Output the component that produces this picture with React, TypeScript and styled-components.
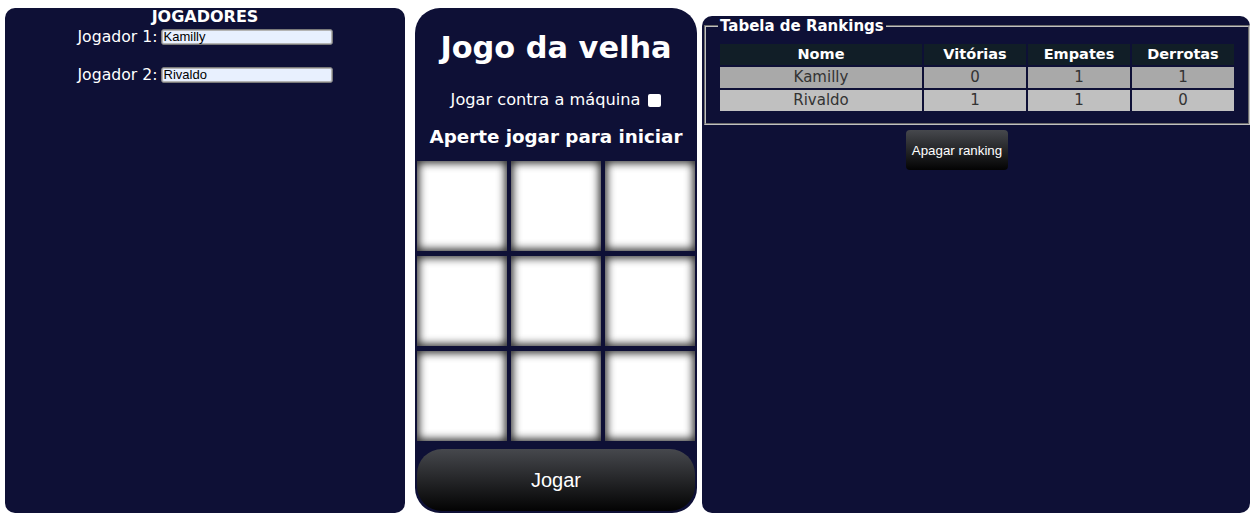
import React from "react";
import styled, { createGlobalStyle } from "styled-components";

const NAVY = "#0e1036";

const GlobalStyle = createGlobalStyle`
  html, body { margin: 0; padding: 0; background: #ffffff; }
  body { font-family: "DejaVu Sans", "Noto Sans", sans-serif; color: #ffffff; }
  * { box-sizing: border-box; }
`;

const Page = styled.div`
  display: flex;
  align-items: flex-end;
  width: 1258px;
  height: 518px;
  padding: 8px 8px 5px 5px;
`;

/* ---------- Players ---------- */
const PlayersPanel = styled.section`
  width: 400px;
  height: 505px;
  background: ${NAVY};
  border-radius: 10px;
  display: flex;
  flex-direction: column;
  align-items: center;
`;

const PanelTitle = styled.h2`
  margin: 0;
  font-size: 16px;
  font-weight: 700;
  line-height: 17px;
`;

const PlayerRow = styled.div<{ $first?: boolean }>`
  display: flex;
  align-items: center;
  justify-content: center;
  gap: 3px;
  height: 19px;
  margin-top: ${(p) => (p.$first ? 2 : 19)}px;
  font-size: 15.7px;
`;

const NameInput = styled.input`
  width: 172px;
  height: 16px;
  padding: 0 2px;
  border: 1px solid #7a7a7a;
  box-shadow: inset 0 0 0 1px #b4b4b4;
  border-radius: 3px;
  background: #e8f0fe;
  color: #000;
  font-family: "Liberation Sans", Arial, sans-serif;
  font-size: 13px;
  outline: none;
`;

/* ---------- Game ---------- */
const GamePanel = styled.section`
  width: 282px;
  height: 505px;
  margin-left: 10px;
  background: ${NAVY};
  border-radius: 25px;
  display: flex;
  flex-direction: column;
  align-items: center;
  padding: 22px 2px 2px;
`;

const GameTitle = styled.h1`
  margin: 0;
  font-size: 30.4px;
  line-height: 36px;
  font-weight: 700;
`;

const MachineToggle = styled.label`
  margin-top: 24px;
  display: flex;
  align-items: center;
  gap: 8px;
  font-size: 16.2px;
  line-height: 20px;
`;

const Checkbox = styled.input`
  appearance: none;
  width: 13px;
  height: 13px;
  margin: 0;
  background: #ffffff;
  border-radius: 2px;
`;

const Status = styled.h3`
  margin: 16px 0 0;
  font-size: 18.3px;
  line-height: 22px;
  font-weight: 700;
`;

const Board = styled.div`
  margin-top: 13px;
  display: grid;
  grid-template-columns: repeat(3, 90px);
  grid-template-rows: repeat(3, 90px);
  column-gap: 4px;
  row-gap: 5px;
`;

const Cell = styled.div`
  background: #ffffff;
  box-shadow: inset 0 0 8px 2px rgba(0, 0, 0, 0.85);
`;

const PlayButton = styled.button`
  margin-top: 8px;
  width: 100%;
  height: 62px;
  border: none;
  border-radius: 25px;
  background: linear-gradient(#46484d, #030303);
  color: #ffffff;
  font-family: "Liberation Sans", Arial, sans-serif;
  font-size: 20px;
  cursor: pointer;
`;

/* ---------- Ranking ---------- */
const RankingPanel = styled.section`
  width: 548px;
  height: 497px;
  margin-left: 5px;
  background: ${NAVY};
  border-radius: 10px;
  padding: 1px 0 0 2px;
  display: flex;
  flex-direction: column;
  align-items: flex-start;
`;

const RankingBox = styled.fieldset`
  margin: 0;
  width: 546px;
  padding: 7px 12px 10px;
  border: 2px groove #c0c0c0;
`;

const Legend = styled.legend`
  padding: 0 2px;
  font-size: 15px;
  font-weight: 700;
  line-height: 18px;
  margin-top: 1px;
`;

const RankTable = styled.table`
  width: 100%;
  table-layout: fixed;
  border-spacing: 2px;
`;

const HeadCell = styled.th`
  background: #111e27;
  color: #ffffff;
  font-size: 14.5px;
  font-weight: 700;
  line-height: 19px;
  padding: 1px;
  text-align: center;
`;

const DataCell = styled.td<{ $alt?: boolean }>`
  background: ${(p) => (p.$alt ? "#c0c0c0" : "#a9a9a9")};
  color: #333333;
  font-size: 15px;
  line-height: 19px;
  padding: 1px;
  text-align: center;
`;

const ClearButton = styled.button`
  margin: 5px 0 0 202px;
  width: 102px;
  height: 40px;
  border: none;
  border-radius: 4px;
  background: linear-gradient(#46484d, #030303);
  color: #ffffff;
  font-family: "Liberation Sans", Arial, sans-serif;
  font-size: 13.333px;
  padding: 0;
  white-space: nowrap;
  cursor: pointer;
`;

const ranking = [
  { nome: "Kamilly", v: 0, e: 1, d: 1 },
  { nome: "Rivaldo", v: 1, e: 1, d: 0 },
];

export default function App() {
  return (
    <>
      <GlobalStyle />
      <Page>
        <PlayersPanel>
          <PanelTitle>JOGADORES</PanelTitle>
          <PlayerRow $first>
            <span>Jogador 1:</span>
            <NameInput defaultValue="Kamilly" />
          </PlayerRow>
          <PlayerRow>
            <span>Jogador 2:</span>
            <NameInput defaultValue="Rivaldo" />
          </PlayerRow>
        </PlayersPanel>

        <GamePanel>
          <GameTitle>Jogo da velha</GameTitle>
          <MachineToggle>
            Jogar contra a máquina
            <Checkbox type="checkbox" />
          </MachineToggle>
          <Status>Aperte jogar para iniciar</Status>
          <Board>
            {Array.from({ length: 9 }).map((_, i) => (
              <Cell key={i} />
            ))}
          </Board>
          <PlayButton>Jogar</PlayButton>
        </GamePanel>

        <RankingPanel>
          <RankingBox>
            <Legend>Tabela de Rankings</Legend>
            <RankTable>
              <colgroup>
                <col style={{ width: 202 }} />
                <col style={{ width: 102 }} />
                <col style={{ width: 102 }} />
                <col style={{ width: 102 }} />
              </colgroup>
              <thead>
                <tr>
                  <HeadCell>Nome</HeadCell>
                  <HeadCell>Vitórias</HeadCell>
                  <HeadCell>Empates</HeadCell>
                  <HeadCell>Derrotas</HeadCell>
                </tr>
              </thead>
              <tbody>
                {ranking.map((r, i) => (
                  <tr key={r.nome}>
                    <DataCell $alt={i % 2 === 1}>{r.nome}</DataCell>
                    <DataCell $alt={i % 2 === 1}>{r.v}</DataCell>
                    <DataCell $alt={i % 2 === 1}>{r.e}</DataCell>
                    <DataCell $alt={i % 2 === 1}>{r.d}</DataCell>
                  </tr>
                ))}
              </tbody>
            </RankTable>
          </RankingBox>
          <ClearButton>Apagar ranking</ClearButton>
        </RankingPanel>
      </Page>
    </>
  );
}
